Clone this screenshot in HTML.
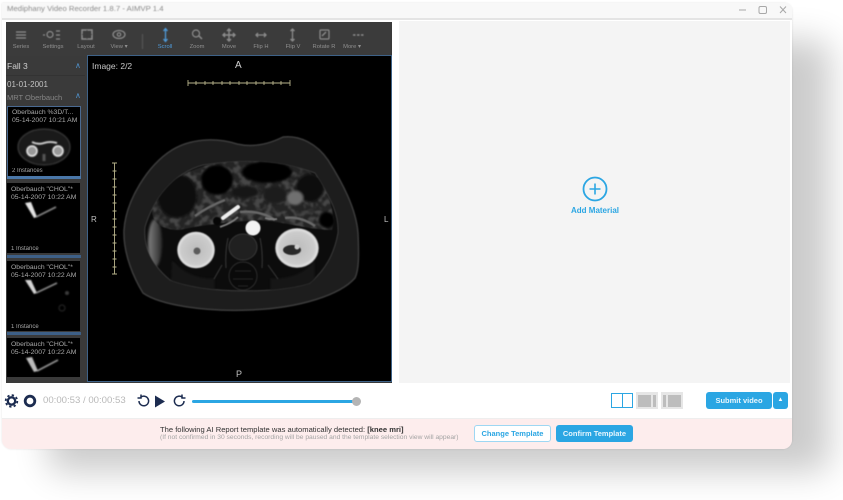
<!DOCTYPE html>
<html lang="en">
<head>
<meta charset="utf-8">
<title>Mediphany Video Recorder</title>
<style>
html,body{margin:0;padding:0;background:#fff;}
body{position:relative;width:843px;height:500px;overflow:hidden;font-family:"Liberation Sans",sans-serif;}
.a{position:absolute;}
.t{position:absolute;white-space:nowrap;line-height:1;}
.shadow{position:absolute;left:48px;top:40px;width:782px;height:432px;background:#000;opacity:.2;filter:blur(17px);border-radius:14px;}
.win{position:absolute;left:2px;top:3px;width:790px;height:446px;background:#fff;border-radius:0 8px 10px 10px;overflow:hidden;box-shadow:0 0 2px rgba(0,0,0,.12);}
.tb{position:absolute;text-align:center;width:40px;font-size:5.8px;color:#909090;top:45px;line-height:1;filter:blur(.35px);}
.thumb{position:absolute;left:7px;width:73px;background:#000;color:#a8a8a8;font-size:6.800px;line-height:8px;overflow:hidden;}
.thumb span{display:block;white-space:nowrap;padding-left:4px;filter:blur(.35px);}
.btn{position:absolute;border-radius:3px;font-size:7.500px;font-weight:bold;text-align:center;filter:blur(.3px);}
svg{position:absolute;overflow:visible;}
</style>
</head>
<body>
<div class="shadow"></div>
<div class="win"></div>

<!-- title bar -->
<div class="a" style="left:2px;top:3px;width:790px;height:15px;background:#f8f8f8;border-radius:0 6px 0 0"></div>
<div class="a" style="left:2px;top:18px;width:790px;height:2px;background:#e4e4e4"></div>
<div class="t" style="left:7px;top:5px;font-size:7.750px;color:#8c8c8c;filter:blur(.4px)">Mediphany Video Recorder 1.8.7 - AIMVP 1.4</div>
<svg style="left:735px;top:4px;filter:blur(.3px)" width="54" height="12" fill="none" stroke="#a8a8a8" stroke-width="1">
  <path d="M4 6h7"/>
  <rect x="24" y="2.500" width="7.500" height="7" rx="1.500"/>
  <path d="M45 2.500l6 6.500M51 2.500l-6 6.500"/>
</svg>

<!-- right panel -->
<div class="a" style="left:399px;top:21px;width:391px;height:362px;background:#f4f4f4"></div>
<svg style="left:582px;top:176px" width="26" height="26" fill="none" stroke="#2ba6e3">
  <circle cx="13" cy="13" r="11.500" stroke-width="1.800"/>
  <path d="M13 7.500v11M7.500 13h11" stroke-width="1.600"/>
</svg>
<div class="t" style="left:571px;top:207px;font-size:8px;font-weight:bold;color:#2ba6e3;filter:blur(.35px)">Add Material</div>

<!-- dark left app -->
<div class="a" style="left:6px;top:22px;width:386px;height:361px;background:#3a3a3a"></div>
<div class="a" style="left:6px;top:23px;width:385px;height:33px;background:#3b3b3b"></div>

<!-- toolbar icons -->
<svg style="left:6px;top:23px;filter:blur(.45px)" width="385" height="24" fill="none" stroke="#8d8d8d" stroke-width="1.200">
  <path d="M10 9h10M10 12h10M10 15h10"/>
  <circle cx="44" cy="11.500" r="3"/><path d="M50 8h4M50 12h4M50 16h4M37 12h2"/>
  <rect x="76" y="7" width="10" height="9" stroke-width="1.500"/><path d="M81 7v9M76 11.500h10" stroke="#3b3b3b" stroke-width=".8"/>
  <ellipse cx="113" cy="11.500" rx="6" ry="4"/><circle cx="113" cy="11.500" r="1.700"/>
  <path d="M136.500 11v15" stroke="#555"/>
  <path d="M159.500 6v12M157.500 8l2-2.500 2 2.500M157.500 16l2 2.500 2-2.500" stroke="#4f9ad8" stroke-width="1.300"/>
  <circle cx="190" cy="10.500" r="3.500"/><path d="M193 13l3 3" stroke-width="1.500"/>
  <path d="M223 6v12M217 12h12M221 8l2-2 2 2M221 16l2 2 2-2M219 10l-2 2 2 2M227 10l2 2-2 2" stroke-width="1.400"/>
  <path d="M250 12h10M252 10l-2 2 2 2M258 10l2 2-2 2" stroke-width="1.300"/>
  <path d="M286.500 6v12M284.500 8l2-2 2 2M284.500 16l2 2 2-2" stroke-width="1.300"/>
  <rect x="314" y="7" width="9" height="9" rx="1"/><path d="M316 13l4-4" stroke-width="1.300"/>
  <path d="M347 12h2.500M351 12h2.500M355 12h2.500" stroke-width="1.600"/>
</svg>
<div class="tb" style="left:1px">Series</div>
<div class="tb" style="left:33px">Settings</div>
<div class="tb" style="left:66px">Layout</div>
<div class="tb" style="left:99px">View ▾</div>
<div class="tb" style="left:145px;color:#4f9ad8">Scroll</div>
<div class="tb" style="left:177px">Zoom</div>
<div class="tb" style="left:209px">Move</div>
<div class="tb" style="left:241px">Flip H</div>
<div class="tb" style="left:273px">Flip V</div>
<div class="tb" style="left:304px">Rotate R</div>
<div class="tb" style="left:332px">More ▾</div>

<!-- side list -->
<div class="t" style="left:7px;top:62px;font-size:8.500px;color:#cfcfcf;filter:blur(.3px)">Fall 3</div>
<div class="t" style="left:75px;top:62px;font-size:8px;color:#4f8fc8">∧</div>
<div class="a" style="left:6px;top:75px;width:79px;height:1px;background:#333"></div>
<div class="t" style="left:7px;top:81px;font-size:8px;color:#c2c2c2;filter:blur(.3px)">01-01-2001</div>
<div class="t" style="left:7px;top:94px;font-size:7.500px;color:#858585;filter:blur(.3px)">MRT Oberbauch</div>
<div class="t" style="left:75px;top:92px;font-size:8px;color:#4f8fc8">∧</div>

<!-- thumb 1 -->
<div class="thumb" style="top:106px;height:69px;width:72px;border:1px solid #4a6a92;box-sizing:content-box;left:7px">
  <span style="padding-top:2px">Oberbauch %3D/T...</span><span>05-14-2007 10:21 AM</span>
  <svg style="left:9px;top:21px;filter:blur(.8px)" width="56" height="38" fill="none">
    <ellipse cx="27" cy="19" rx="26" ry="18" fill="#1a1a1a" stroke="#444"/>
    <circle cx="15" cy="23" r="5" fill="#999" stroke="#eee" stroke-width="1.500"/>
    <circle cx="41" cy="23" r="5" fill="#999" stroke="#eee" stroke-width="1.500"/>
    <path d="M15 14q6 3 12 1t13 0" stroke="#ddd" stroke-width="1.800"/>
    <path d="M27 26v7" stroke="#555" stroke-width="3"/>
  </svg>
  <span class="a" style="left:0;top:60px;font-size:6px">2 Instances</span>
</div>
<div class="a" style="left:7px;top:176px;width:74px;height:3px;background:#4a77a8"></div>

<!-- thumb 2 -->
<div class="thumb" style="top:183px;height:70px">
  <span style="padding-top:3px">Oberbauch "CHOL"*</span><span>05-14-2007 10:22 AM</span>
  <svg style="left:0;top:0;filter:blur(.9px)" width="73" height="70" fill="none">
    <path d="M18 20l6 -1 6 15-3 1z" fill="#e4e4e4"/><path d="M29 34l20-10" stroke="#8c8c8c" stroke-width="1.600"/>
  </svg>
  <span class="a" style="left:0;top:62px;font-size:6px">1 Instance</span>
</div>
<div class="a" style="left:7px;top:255px;width:74px;height:3px;background:#3d5f86"></div>

<!-- thumb 3 -->
<div class="thumb" style="top:261px;height:70px">
  <span style="padding-top:3px">Oberbauch "CHOL"*</span><span>05-14-2007 10:22 AM</span>
  <svg style="left:0;top:0;filter:blur(.9px)" width="73" height="70" fill="none">
    <path d="M18 19l6 0 6 13-3 1z" fill="#d4d4d4"/><path d="M29 32l21-10" stroke="#8c8c8c" stroke-width="1.600"/>
    <circle cx="60" cy="32" r="2" fill="#3a3a3a"/><circle cx="55" cy="47" r="3" stroke="#2a2a2a"/>
  </svg>
  <span class="a" style="left:0;top:62px;font-size:6px">1 Instance</span>
</div>
<div class="a" style="left:7px;top:332px;width:74px;height:3px;background:#3d5f86"></div>

<!-- thumb 4 -->
<div class="thumb" style="top:338px;height:39px">
  <span style="padding-top:3px">Oberbauch "CHOL"*</span><span>05-14-2007 10:22 AM</span>
  <svg style="left:0;top:0;filter:blur(.9px)" width="73" height="39" fill="none">
    <path d="M19 20l6 -1 6 14-4 1z" fill="#bbb"/><path d="M30 33l21-11" stroke="#999" stroke-width="1.600"/>
  </svg>
</div>

<!-- main viewer -->
<div class="a" style="left:87px;top:55px;width:305px;height:327px;background:#000;border:1px solid #3e6288;box-sizing:border-box"></div>
<div class="t" style="left:92px;top:62px;font-size:8.500px;color:#c8c8c8;filter:blur(.3px)">Image: 2/2</div>
<div class="t" style="left:235px;top:61px;font-size:10px;color:#d0d0d0;filter:blur(.3px)">A</div>
<div class="t" style="left:91px;top:216px;font-size:8px;color:#c0c0c0;filter:blur(.3px)">R</div>
<div class="t" style="left:384px;top:216px;font-size:8px;color:#c0c0c0;filter:blur(.3px)">L</div>
<div class="t" style="left:236px;top:370px;font-size:9px;color:#c0c0c0;filter:blur(.3px)">P</div>

<!-- rulers -->
<svg style="left:0;top:0;filter:blur(.25px)" width="400" height="300" fill="none" stroke="#b8b48c" stroke-width=".9">
  <path d="M188 83h102M188 80v6M290 80v6M196 81v4M205 81v4M213 81v4M222 81v4M230 81v4M239 81v4M247 81v4M256 81v4M264 81v4M273 81v4M281 81v4"/>
  <path d="M114.500 163v111M112 163h5M112 274h5M112.500 171h4M112.500 179h4M112.500 187h4M112.500 195h4M112.500 203h4M112.500 211h4M112.500 219h4M112.500 227h4M112.500 235h4M112.500 243h4M112.500 251h4M112.500 259h4M112.500 267h4"/>
</svg>

<!-- MRI scan -->
<svg style="left:110px;top:130px;filter:blur(.55px)" width="270" height="190">
  <defs>
    <filter id="b1"><feGaussianBlur stdDeviation="1"/></filter>
    <filter id="b2"><feGaussianBlur stdDeviation="2"/></filter>
    <filter id="mott" x="0" y="0" width="100%" height="100%">
      <feTurbulence type="fractalNoise" baseFrequency=".16" numOctaves="2" seed="7"/>
      <feColorMatrix type="matrix" values="0 0 0 0 1  0 0 0 0 1  0 0 0 0 1  5 0 0 0 -2.200"/>
      <feGaussianBlur stdDeviation=".5"/>
    </filter>
    <radialGradient id="k"><stop offset="0" stop-color="#bcbcbc"/><stop offset=".8" stop-color="#cccccc"/><stop offset=".94" stop-color="#e4e4e4"/><stop offset="1" stop-color="#666"/></radialGradient>
    <linearGradient id="lv" x1="0" x2="1"><stop offset="0" stop-color="#808080"/><stop offset="1" stop-color="#2a2a2a"/></linearGradient>
    <clipPath id="cav"><path d="M35 97C43 70 63 43 93 35C125 30 165 28 205 43C222 70 229 85 228 103C224 125 215 140 200 153C170 163 100 165 60 150C42 135 33 118 35 97Z"/></clipPath>
    <clipPath id="gut"><path d="M42 80C50 55 75 38 110 33C150 28 190 32 208 48C222 68 226 90 222 100C200 100 175 92 150 90C120 92 90 95 70 100C55 100 42 95 42 80Z"/></clipPath>
  </defs>
  <path d="M14 100C16 70 38 35 62 20C80 9 105 7 127 14C140 17 155 16 173 7C190 5 207 14 218 30C232 52 246 78 248 103C249 125 249 140 245 148C230 165 190 178 140 180C95 182 50 175 33 163C25 150 13 125 14 100Z" fill="#1d1d1d" stroke="#3c3c3c" stroke-width="1.500"/>
  <path d="M35 97C43 70 63 43 93 35C125 30 165 28 205 43C222 70 229 85 228 103C224 125 215 140 200 153C170 163 100 165 60 150C42 135 33 118 35 97Z" fill="#0c0c0c" stroke="#3a3a3a" stroke-width="1"/>
  <g clip-path="url(#cav)">
    <ellipse cx="45" cy="113" rx="7" ry="24" fill="url(#lv)" filter="url(#b1)"/>
    <path d="M62 130Q80 150 105 148L105 162H60ZM205 130Q190 150 160 148L160 162H205Z" fill="#181818" filter="url(#b1)"/>
    <g clip-path="url(#gut)">
      <rect x="35" y="28" width="195" height="75" fill="#242424"/>
      <rect x="35" y="28" width="195" height="75" filter="url(#mott)" opacity=".16"/>
      <g filter="url(#b1)">
        <ellipse cx="67" cy="66" rx="20" ry="22" fill="#070707"/>
        <ellipse cx="107" cy="50" rx="16" ry="15" fill="#050505"/>
        <ellipse cx="157" cy="42" rx="25" ry="11" fill="#050505"/>
        <ellipse cx="200" cy="58" rx="14" ry="14" fill="#090909"/>
        <ellipse cx="217" cy="90" rx="8" ry="8" fill="#050505"/>
        <ellipse cx="185" cy="68" rx="8" ry="7" fill="#707070"/>
        <ellipse cx="165" cy="65" rx="12" ry="9" fill="#1c1c1c"/>
        <ellipse cx="135" cy="62" rx="14" ry="6" fill="#181818"/>
      </g>
    </g>
  </g>
  <path d="M113 88L128 77" stroke="#eeeeee" stroke-width="4" stroke-linecap="round"/>
  <path d="M85 86q14-10 30-16M130 82q20-2 35 8M175 88q15-2 30 8" stroke="#686868" stroke-width="2.500" fill="none"/>
  <path d="M110 97q12-4 18-10M155 88q6 2 12 1" stroke="#808080" stroke-width="1.800" fill="none"/>
  <circle cx="107" cy="91" r="4" fill="#060606"/>
  <circle cx="143" cy="98" r="7.500" fill="#f2f2f2"/>
  <ellipse cx="86" cy="120" rx="19" ry="18.500" fill="url(#k)"/>
  <circle cx="87" cy="121" r="3.500" fill="#5c5c5c"/>
  <ellipse cx="187" cy="118" rx="22" ry="20" fill="url(#k)"/>
  <ellipse cx="182" cy="120" rx="9" ry="5" fill="#2a2a2a"/>
  <circle cx="187" cy="117" r="2.500" fill="#cfcfcf"/>
  <ellipse cx="133" cy="117" rx="14" ry="13" fill="#202020" stroke="#383838"/>
  <path d="M118 108q-3 14-2 30M150 108q3 14 2 30M158 135l10 14M112 135l-8 14" stroke="#383838" fill="none"/>
  <ellipse cx="133" cy="146" rx="14" ry="14" fill="#0a0a0a" stroke="#2c2c2c"/>
  <path d="M125 141h16M123 149h20M128 156h10" stroke="#262626"/>
</svg>

<!-- control bar -->
<svg style="left:4px;top:393px;filter:blur(.25px)" width="36" height="16" fill="none">
  <circle cx="7.500" cy="8" r="5.800" stroke="#1c2c50" stroke-width="1.800" stroke-dasharray="2.280 2.280"/>
  <circle cx="7.500" cy="8" r="3.700" stroke="#1c2c50" stroke-width="2.300"/>
  <circle cx="26" cy="8" r="4.800" fill="#fff" stroke="#1c2c50" stroke-width="2.800"/>
</svg>
<div class="t" style="left:43px;top:396px;font-size:9.600px;color:#b8b8b8;filter:blur(.25px)">00:00:53 / 00:00:53</div>
<svg style="left:136px;top:393px;filter:blur(.2px)" width="50" height="16" fill="none" stroke="#1c2c50" stroke-width="1.500">
  <path d="M4.500 4.500a4.800 4.800 0 1 1-1.500 3.500M5 1.500v3.500h-3.500"/>
  <path d="M19 2.500l10 6-10 6z" fill="#1c2c50" stroke="none"/>
  <path d="M46.500 4.500a4.800 4.800 0 1 0 1.500 3.500M46 1.500v3.500h3.500"/>
</svg>
<div class="a" style="left:192px;top:400px;width:164px;height:3px;background:#2ba6e3;border-radius:2px"></div>
<div class="a" style="left:352px;top:397px;width:9px;height:9px;background:#b4b4b4;border-radius:50%"></div>

<div class="a" style="left:611px;top:393px;width:22px;height:15px;border:1px solid #2ba6e3;box-sizing:border-box;background:linear-gradient(90deg,transparent 10px,#2ba6e3 10px,#2ba6e3 11px,transparent 11px)"></div>
<div class="a" style="left:636px;top:392px;width:22px;height:17px;background:#e6e6e6"></div>
<div class="a" style="left:638px;top:395px;width:13px;height:12px;background:#bdbdbd"></div>
<div class="a" style="left:653px;top:395px;width:3px;height:12px;background:#bdbdbd"></div>
<div class="a" style="left:661px;top:392px;width:22px;height:17px;background:#e6e6e6"></div>
<div class="a" style="left:663px;top:395px;width:3px;height:12px;background:#bdbdbd"></div>
<div class="a" style="left:668px;top:395px;width:13px;height:12px;background:#bdbdbd"></div>
<div class="btn" style="left:706px;top:392px;width:66px;height:17px;line-height:17px;background:#2ba6e3;color:#e8f6fd">Submit video</div>
<div class="btn" style="left:773px;top:392px;width:15px;height:17px;line-height:17px;background:#2ba6e3;color:#fff;font-size:6px">▲</div>

<!-- notification -->
<div class="a" style="left:2px;top:418px;width:790px;height:31px;background:#fdeded;border-top:1px solid #eee;box-sizing:border-box;border-radius:0 0 9px 9px"></div>
<div class="t" style="left:160px;top:426px;font-size:7.600px;color:#333;filter:blur(.25px)">The following AI Report template was automatically detected: <b>[knee mri]</b></div>
<div class="t" style="left:160px;top:435px;font-size:6.700px;color:#a4a4a4;filter:blur(.25px)">(If not confirmed in 30 seconds, recording will be paused and the template selection view will appear)</div>
<div class="btn" style="left:474px;top:425px;width:77px;height:17px;line-height:15px;background:#fff;color:#2ba6e3;border:1px solid #9ed7f3;box-sizing:border-box">Change Template</div>
<div class="btn" style="left:556px;top:425px;width:77px;height:17px;line-height:17px;background:#2ba6e3;color:#e8f6fd">Confirm Template</div>
</body>
</html>
